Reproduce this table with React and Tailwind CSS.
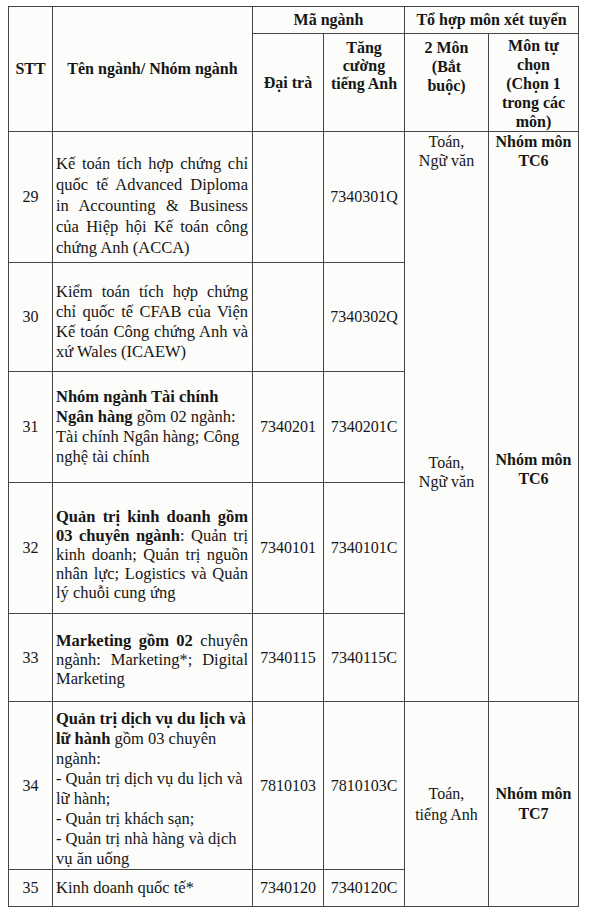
const C = "bg-[#fcfcfa]";
const J = "text-justify [text-align-last:justify]";

function NameCell({ children, leading = "leading-[20px]", pt = "" }) {
  return (
    <div className={`${C} flex flex-col justify-center pl-[3px] pr-[4px] text-[16.5px] ${leading} ${pt}`}>
      {children}
    </div>
  );
}

function Mid({ children, className = "" }) {
  return <div className={`${C} flex items-center justify-center text-center ${className}`}>{children}</div>;
}

export default function App() {
  return (
    <div className="w-[596px] h-[916px] bg-white pt-[6px] pl-[8px] font-['Liberation_Serif',serif] text-[16px] text-[#161616]">
      <div className="grid w-fit grid-cols-[43px_199px_70px_80px_83px_89px] grid-rows-[26px_97px_130px_108px_110px_130px_87px_167px_36px] gap-px bg-[#474747] p-px">
        {/* header */}
        <Mid className="row-span-2 font-bold">STT</Mid>
        <Mid className="row-span-2 font-bold">Tên ngành/ Nhóm ngành</Mid>
        <Mid className="col-span-2 font-bold">Mã ngành</Mid>
        <Mid className="col-span-2 font-bold">Tổ hợp môn xét tuyển</Mid>
        <Mid className="font-bold">Đại trà</Mid>
        <div className={`${C} flex flex-col items-center pt-[5px] text-center font-bold leading-[18px]`}>
          <div>Tăng</div>
          <div>cường</div>
          <div>tiếng Anh</div>
        </div>
        <div className={`${C} flex flex-col items-center pt-[4px] text-center font-bold leading-[19px]`}>
          <div>2 Môn</div>
          <div>(Bắt</div>
          <div>buộc)</div>
        </div>
        <div className={`${C} flex flex-col items-center pt-[2px] text-center font-bold leading-[19px]`}>
          <div>Môn tự</div>
          <div>chọn</div>
          <div>(Chọn 1</div>
          <div>trong các</div>
          <div>môn)</div>
        </div>

        {/* 29 */}
        <Mid>29</Mid>
        <NameCell leading="leading-[21px]" pt="pt-[16px]">
          <div className={J}>Kế toán tích hợp chứng chỉ</div>
          <div className={J}>quốc tế Advanced Diploma</div>
          <div className={J}>in Accounting &amp; Business</div>
          <div className={J}>của Hiệp hội Kế toán công</div>
          <div>chứng Anh (ACCA)</div>
        </NameCell>
        <div className={C}></div>
        <Mid>7340301Q</Mid>
        <div className={`${C} row-span-5 flex flex-col items-center text-center leading-[19px]`}>
          <div>
            <div>Toán,</div>
            <div>Ngữ văn</div>
          </div>
          <div className="mt-[283px]">
            <div>Toán,</div>
            <div>Ngữ văn</div>
          </div>
        </div>
        <div className={`${C} row-span-5 flex flex-col items-center text-center font-bold leading-[19px]`}>
          <div>
            <div>Nhóm môn</div>
            <div>TC6</div>
          </div>
          <div className="mt-[280px]">
            <div>Nhóm môn</div>
            <div>TC6</div>
          </div>
        </div>

        {/* 30 */}
        <Mid>30</Mid>
        <NameCell pt="pt-[10px]">
          <div className={J}>Kiểm toán tích hợp chứng</div>
          <div className={J}>chỉ quốc tế CFAB của Viện</div>
          <div className={J}>Kế toán Công chứng Anh và</div>
          <div>xứ Wales (ICAEW)</div>
        </NameCell>
        <div className={C}></div>
        <Mid>7340302Q</Mid>

        {/* 31 */}
        <Mid>31</Mid>
        <NameCell>
          <div className="whitespace-nowrap font-bold">Nhóm ngành Tài chính</div>
          <div className="whitespace-nowrap">
            <span className="font-bold">Ngân hàng</span> gồm 02 ngành:
          </div>
          <div className="whitespace-nowrap">Tài chính Ngân hàng; Công</div>
          <div className="whitespace-nowrap">nghệ tài chính</div>
        </NameCell>
        <Mid>7340201</Mid>
        <Mid>7340201C</Mid>

        {/* 32 */}
        <Mid>32</Mid>
        <NameCell leading="leading-[19px]" pt="pt-[12px]">
          <div className={`${J} font-bold`}>Quản trị kinh doanh gồm</div>
          <div className={J}>
            <span className="font-bold">03 chuyên ngành</span>: Quản trị
          </div>
          <div className={J}>kinh doanh; Quản trị nguồn</div>
          <div className={J}>nhân lực; Logistics và Quản</div>
          <div>lý chuỗi cung ứng</div>
        </NameCell>
        <Mid>7340101</Mid>
        <Mid>7340101C</Mid>

        {/* 33 */}
        <Mid>33</Mid>
        <NameCell leading="leading-[19px]" pt="pt-[4px]">
          <div className={J}>
            <span className="font-bold">Marketing gồm 02</span> chuyên
          </div>
          <div className={J}>ngành: Marketing*; Digital</div>
          <div>Marketing</div>
        </NameCell>
        <Mid>7340115</Mid>
        <Mid>7340115C</Mid>

        {/* 34 */}
        <Mid>34</Mid>
        <NameCell pt="pt-[6px]">
          <div className="whitespace-nowrap font-bold">Quản trị dịch vụ du lịch và</div>
          <div className="whitespace-nowrap">
            <span className="font-bold">lữ hành</span> gồm 03 chuyên
          </div>
          <div className="whitespace-nowrap">ngành:</div>
          <div className="whitespace-nowrap">- Quản trị dịch vụ du lịch và</div>
          <div className="whitespace-nowrap">lữ hành;</div>
          <div className="whitespace-nowrap">- Quản trị khách sạn;</div>
          <div className="whitespace-nowrap">- Quản trị nhà hàng và dịch</div>
          <div className="whitespace-nowrap">vụ ăn uống</div>
        </NameCell>
        <Mid>7810103</Mid>
        <Mid>7810103C</Mid>
        <div className={`${C} row-span-2 flex flex-col items-center justify-center text-center leading-[21px]`}>
          <div>Toán,</div>
          <div>tiếng Anh</div>
        </div>
        <div className={`${C} row-span-2 flex flex-col items-center justify-center text-center font-bold leading-[20px]`}>
          <div>Nhóm môn</div>
          <div>TC7</div>
        </div>

        {/* 35 */}
        <Mid>35</Mid>
        <NameCell>
          <div className="whitespace-nowrap">Kinh doanh quốc tế*</div>
        </NameCell>
        <Mid>7340120</Mid>
        <Mid>7340120C</Mid>
      </div>
    </div>
  );
}
